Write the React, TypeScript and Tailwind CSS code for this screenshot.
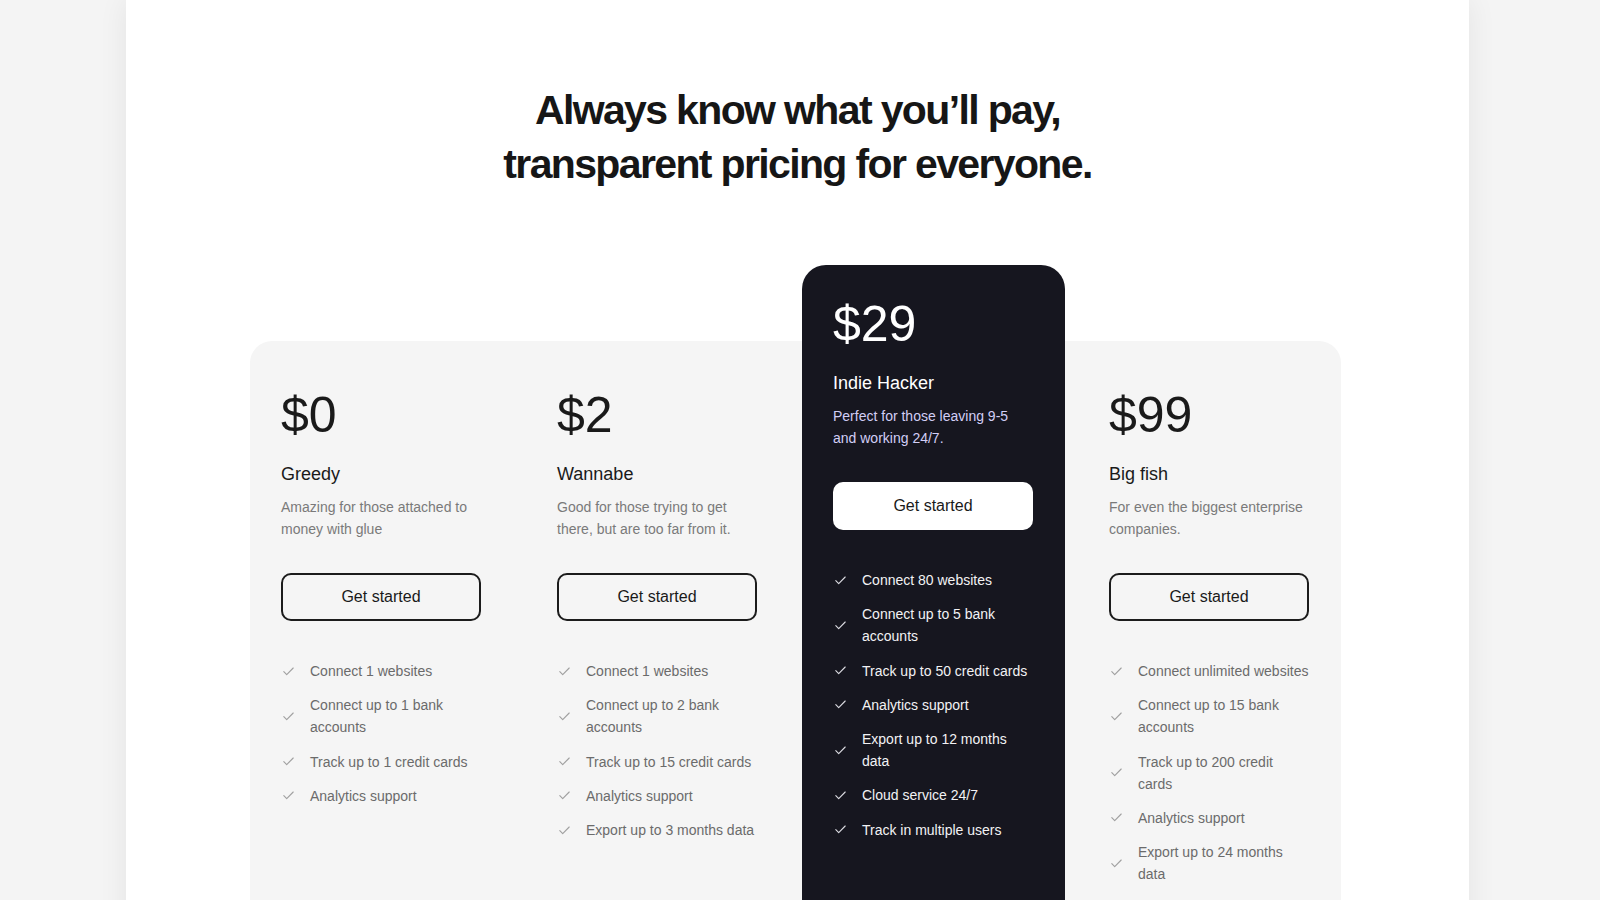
type Plan = {
  price: string
  name: string
  desc: string
  features: string[]
  featured?: boolean
}

const plans: Plan[] = [
  {
    price: "$0",
    name: "Greedy",
    desc: "Amazing for those attached to money with glue",
    features: ["Connect 1 websites", "Connect up to 1 bank accounts", "Track up to 1 credit cards", "Analytics support"],
  },
  {
    price: "$2",
    name: "Wannabe",
    desc: "Good for those trying to get there, but are too far from it.",
    features: [
      "Connect 1 websites",
      "Connect up to 2 bank accounts",
      "Track up to 15 credit cards",
      "Analytics support",
      "Export up to 3 months data",
    ],
  },
  {
    price: "$29",
    name: "Indie Hacker",
    desc: "Perfect for those leaving 9-5 and working 24/7.",
    featured: true,
    features: [
      "Connect 80 websites",
      "Connect up to 5 bank accounts",
      "Track up to 50 credit cards",
      "Analytics support",
      "Export up to 12 months data",
      "Cloud service 24/7",
      "Track in multiple users",
    ],
  },
  {
    price: "$99",
    name: "Big fish",
    desc: "For even the biggest enterprise companies.",
    features: [
      "Connect unlimited websites",
      "Connect up to 15 bank accounts",
      "Track up to 200 credit cards",
      "Analytics support",
      "Export up to 24 months data",
    ],
  },
]

function Check({ dark }: { dark?: boolean }) {
  return (
    <svg width="11" height="9" viewBox="0 0 11 9" fill="none" className="ml-[2px]">
      <path
        d="M0.8 4.6 L3.7 7.6 L10.2 1"
        stroke={dark ? "#dcdce2" : "#a0a0a0"}
        strokeWidth="1.1"
        strokeLinecap="round"
        strokeLinejoin="round"
      />
    </svg>
  )
}

function PlanColumn({ plan }: { plan: Plan }) {
  const dark = plan.featured
  return (
    <div
      className={
        dark
          ? "-mt-[76px] rounded-[24px] bg-[#16161f] pl-[31px] pr-[29px] pt-[34px] pb-[60px]"
          : "pl-[31px] pr-[29px] pt-[49px] pb-[60px]"
      }
    >
      <p className={`text-[50px] leading-[50px] ${dark ? "text-white" : "text-[#1a1a1a]"}`}>{plan.price}</p>
      <h3 className={`mt-[20px] text-[18px] leading-[28px] ${dark ? "text-white" : "text-[#1a1a1a]"}`}>
        {plan.name}
      </h3>
      <p className={`mt-[8px] w-[200px] text-[14px] leading-[22px] ${dark ? "text-[#d2cef6]" : "text-[#7a7a7a]"}`}>
        {plan.desc}
      </p>
      <button
        className={
          dark
            ? "mt-[33px] h-[48px] w-[200px] rounded-[10px] bg-white text-[16px] text-[#1a1a1a]"
            : "mt-[33px] h-[48px] w-[200px] rounded-[10px] border-2 border-[#1c1c1c] text-[16px] text-[#1a1a1a]"
        }
      >
        Get started
      </button>
      <ul className="mt-[39px] flex w-[200px] flex-col gap-[12.3px]">
        {plan.features.map((f) => (
          <li key={f} className="flex items-center gap-[9px]">
            <span className="flex w-[20px]">
              <Check dark={dark} />
            </span>
            <span className={`flex-1 text-[14px] leading-[22px] ${dark ? "text-[#f2f2f4]" : "text-[#6b6b6b]"}`}>
              {f}
            </span>
          </li>
        ))}
      </ul>
    </div>
  )
}

export default function App() {
  return (
    <div
      className="h-[900px] overflow-hidden bg-[#f4f4f4]"
      style={{ fontFamily: '"Liberation Sans", Arial, sans-serif' }}
    >
      <div className="ml-[126px] min-h-[900px] w-[1343px] bg-white pt-[83px] shadow-[0_0_28px_rgba(0,0,0,0.07)]">
        <h1 className="text-center text-[41px] font-bold leading-[54px] tracking-[-0.04em] text-[#161616]">
          Always know what you’ll pay,
          <br />
          transparent pricing for everyone.
        </h1>

        <div className="mt-[150px] ml-[124px] grid w-[1091px] grid-cols-4 gap-[13px] rounded-[22px] bg-[#f5f5f5]">
          {plans.map((p) => (
            <PlanColumn key={p.name} plan={p} />
          ))}
        </div>
      </div>
    </div>
  )
}
